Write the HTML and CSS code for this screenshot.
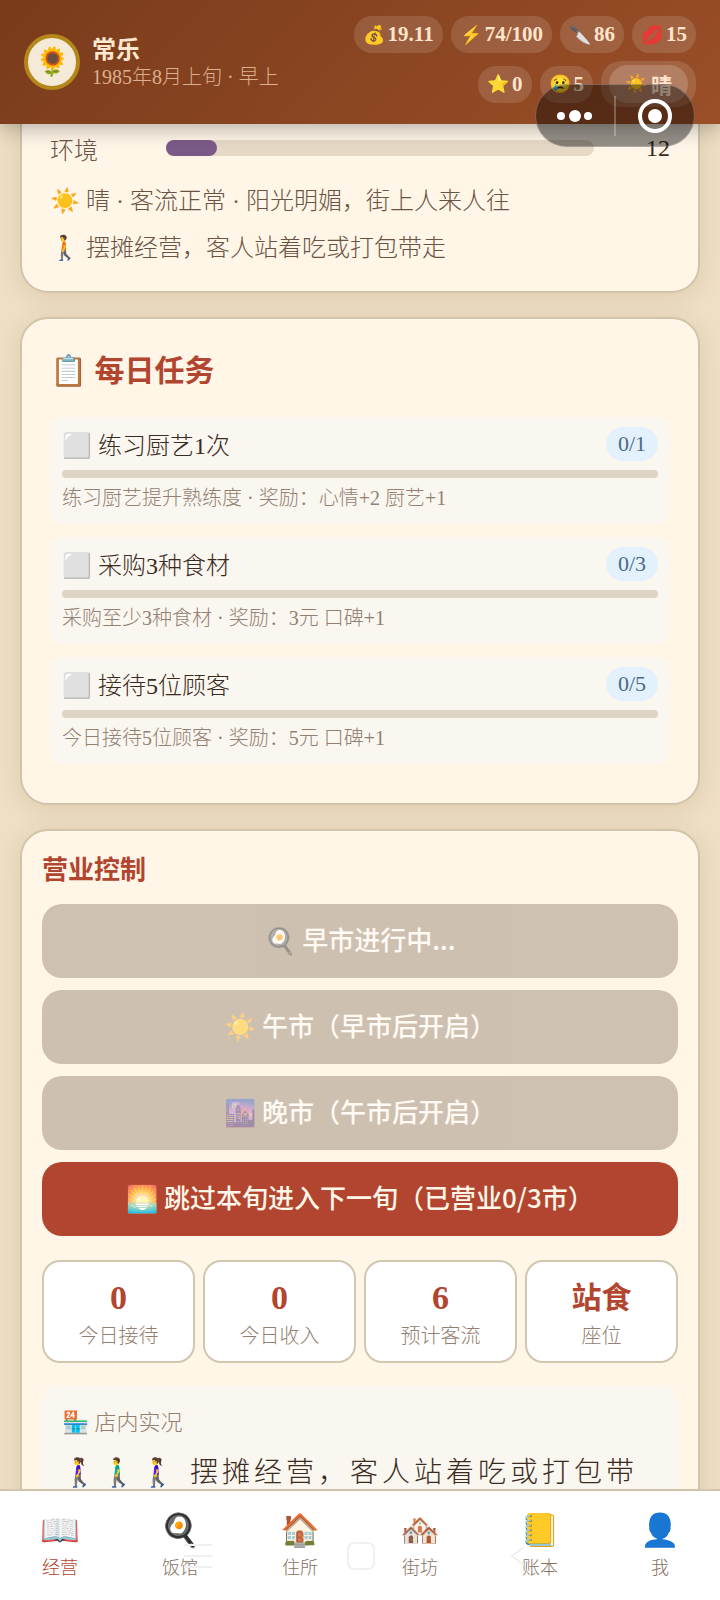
FILE: index.html
```html
<!DOCTYPE html>
<html lang="zh-CN">
<head>
    <meta charset="UTF-8">
    <meta name="viewport" content="width=device-width, initial-scale=1.0">
    <title>常乐 · 经营</title>
    <link rel="stylesheet" href="styles.css">
</head>
<body>

<header class="header">
    <div class="avatar">🌻</div>
    <div class="player">
        <div class="player-name">常乐</div>
        <div class="player-date">1985年8月上旬 · 早上</div>
    </div>
    <div class="stats">
        <span class="chip"><span class="chip-icon">💰</span>19.11</span>
        <span class="chip"><span class="chip-icon">⚡</span>74/100</span>
        <span class="chip"><span class="chip-icon">🔪</span>86</span>
        <span class="chip"><span class="chip-icon">💋</span>15</span>
        <span class="chip"><span class="chip-icon">⭐</span>0</span>
        <span class="chip"><span class="chip-icon">😢</span>5</span>
        <span class="chip chip-weather"><span class="weather"><span class="chip-icon">☀️</span>晴</span></span>
    </div>

    <!-- mini program capsule -->
    <div class="capsule">
        <button class="capsule-btn" aria-label="更多">
            <svg width="36" height="14" viewBox="0 0 36 14" fill="#fff">
                <circle cx="4" cy="7" r="4"/>
                <circle cx="18" cy="7" r="6"/>
                <circle cx="31" cy="7" r="4"/>
            </svg>
        </button>
        <button class="capsule-btn" aria-label="关闭">
            <svg width="34" height="34" viewBox="0 0 34 34">
                <circle cx="17" cy="17" r="15" fill="none" stroke="#fff" stroke-width="4"/>
                <circle cx="17" cy="17" r="7" fill="#fff"/>
            </svg>
        </button>
    </div>
</header>

<main class="content">
    <section class="card card-top">
        <div class="attr">
            <span class="attr-name">环境</span>
            <div class="attr-bar"><div class="attr-fill" style="width: 12%"></div></div>
            <span class="attr-value">12</span>
        </div>
        <p class="note">☀️ 晴 · 客流正常 · 阳光明媚，街上人来人往</p>
        <p class="note">🚶 摆摊经营，客人站着吃或打包带走</p>
    </section>

    <section class="card">
        <h2 class="card-title">📋 每日任务</h2>
        <div class="task">
            <div class="task-head"><span>⬜ 练习厨艺1次</span><span class="badge">0/1</span></div>
            <div class="task-bar"></div>
            <div class="task-desc">练习厨艺提升熟练度 · 奖励：心情+2 厨艺+1</div>
        </div>
        <div class="task">
            <div class="task-head"><span>⬜ 采购3种食材</span><span class="badge">0/3</span></div>
            <div class="task-bar"></div>
            <div class="task-desc">采购至少3种食材 · 奖励：3元 口碑+1</div>
        </div>
        <div class="task">
            <div class="task-head"><span>⬜ 接待5位顾客</span><span class="badge">0/5</span></div>
            <div class="task-bar"></div>
            <div class="task-desc">今日接待5位顾客 · 奖励：5元 口碑+1</div>
        </div>
    </section>

    <section class="card card-control">
        <h3 class="section-title">营业控制</h3>
        <div class="actions">
            <button class="btn" disabled>🍳 早市进行中...</button>
            <button class="btn" disabled>☀️ 午市（早市后开启）</button>
            <button class="btn" disabled>🌆 晚市（午市后开启）</button>
            <button class="btn">🌅 跳过本旬进入下一旬（已营业0/3市）</button>
        </div>
        <div class="summary">
            <div class="summary-item"><div class="summary-num">0</div><div class="summary-label">今日接待</div></div>
            <div class="summary-item"><div class="summary-num">0</div><div class="summary-label">今日收入</div></div>
            <div class="summary-item"><div class="summary-num">6</div><div class="summary-label">预计客流</div></div>
            <div class="summary-item"><div class="summary-num summary-word">站食</div><div class="summary-label">座位</div></div>
        </div>
        <div class="live">
            <div class="live-title">🏪 店内实况</div>
            <div class="live-text">🚶‍♀️🚶‍♂️🚶‍♀️ 摆摊经营，客人站着吃或打包带走</div>
        </div>
    </section>
</main>

<nav class="tabbar">
    <a class="tab active" href="#"><span class="tab-icon">📖</span>经营</a>
    <a class="tab" href="#"><span class="tab-icon">🍳</span>饭馆</a>
    <a class="tab" href="#"><span class="tab-icon">🏠</span>住所</a>
    <a class="tab" href="#"><span class="tab-icon">🏘️</span>街坊</a>
    <a class="tab" href="#"><span class="tab-icon">📒</span>账本</a>
    <a class="tab" href="#"><span class="tab-icon">👤</span>我</a>

    <!-- system navigation keys -->
    <div class="syskeys">
        <svg width="28" height="28" viewBox="0 0 28 28"><path d="M0 3h28M0 14h28M0 25h28"/></svg>
        <svg width="28" height="28" viewBox="0 0 28 28"><rect x="1" y="1" width="26" height="26" rx="6"/></svg>
        <svg width="24" height="28" viewBox="0 0 24 28"><path d="M14 5L2 14l12 9"/></svg>
    </div>
</nav>

</body>
</html>
```

FILE: styles.css
```css
* {
    box-sizing: border-box;
}
body {
    font-family: 'Liberation Serif', 'Noto Sans CJK SC', serif;
    font-weight: 300;
    color: #3a2a20;
    background-color: #eee0c5;
    margin: 0;
    height: 100vh;
    display: flex;
    flex-direction: column;
}
h2, h3, p {
    margin: 0;
}
button {
    font-family: inherit;
    border: none;
    padding: 0;
    cursor: pointer;
}

/* header */
.header {
    position: relative;
    z-index: 2;
    display: flex;
    align-items: center;
    gap: 12px;
    padding: 16px 24px 17px;
    background: linear-gradient(135deg, #7a3b1b, #9a4f28);
    box-shadow: 0 4px 20px rgba(0, 0, 0, 0.3);
}
.avatar {
    flex: none;
    display: flex;
    justify-content: center;
    align-items: center;
    width: 56px;
    height: 56px;
    font-size: 28px;
    background-color: #f5e9d7;
    border: 4px solid #b38719;
    border-radius: 50%;
}
.player {
    flex: none;
}
.player-name {
    padding-top: 2px;
    font-size: 24px;
    line-height: 28px;
    font-weight: bold;
    color: #ffe8d0;
}
.player-date {
    font-size: 20px;
    line-height: 26px;
    color: #dcaf8e;
}
.stats {
    flex: 1;
    max-width: 380px;
    margin-left: auto;
    display: flex;
    flex-wrap: wrap;
    justify-content: flex-end;
    align-items: center;
    gap: 8px;
}
.chip {
    display: flex;
    align-items: center;
    gap: 3px;
    height: 37px;
    padding: 0 9px;
    font-size: 21px;
    font-weight: bold;
    color: #ffe4cc;
    background-color: rgba(255, 255, 255, 0.13);
    border-radius: 18px;
}
.chip-icon {
    font-size: 18px;
}
.chip-weather {
    height: 46px;
    padding: 0 8px;
    border-radius: 20px;
}
.weather {
    display: flex;
    align-items: center;
    gap: 4px;
    height: 38px;
    padding: 0 16px;
    background-color: rgba(255, 255, 255, 0.18);
    border-radius: 20px;
}
.capsule {
    position: absolute;
    top: 84px;
    right: 25px;
    display: flex;
    align-items: center;
    width: 160px;
    height: 63px;
    background-color: rgba(0, 0, 0, 0.42);
    border: 1px solid rgba(255, 255, 255, 0.25);
    border-radius: 32px;
}
.capsule-btn {
    flex: 1;
    display: flex;
    justify-content: center;
    align-items: center;
    height: 40px;
    background: none;
}
.capsule-btn + .capsule-btn {
    border-left: 2px solid rgba(255, 255, 255, 0.25);
}

/* scrolling area */
.content {
    flex: 1;
    min-height: 0;
    overflow: hidden;
    padding: 0 20px;
}
.card {
    margin-bottom: 24px;
    padding: 28px 28px 26px;
    background-color: #fff6e8;
    border: 2px solid #d1c4aa;
    border-radius: 28px;
    box-shadow: 0 4px 24px rgba(139, 90, 43, 0.16);
}
.card-top {
    padding: 4px 28px 23px;
    border-top: none;
    border-radius: 0 0 28px 28px;
}
.attr {
    display: flex;
    align-items: center;
    height: 40px;
    margin-bottom: 13px;
    font-size: 24px;
}
.attr-name {
    width: 116px;
    color: #6b5344;
}
.attr-bar {
    flex: 1;
    height: 16px;
    background-color: #e6dac6;
    border-radius: 8px;
}
.attr-fill {
    height: 16px;
    background-color: #7b5a88;
    border-radius: 8px;
}
.attr-value {
    width: 76px;
    text-align: right;
}
.note {
    font-size: 24px;
    line-height: 40px;
    color: #6b5344;
}
.note + .note {
    margin-top: 7px;
}

/* daily tasks */
.card-title {
    margin-bottom: 22px;
    font-size: 30px;
    line-height: 48px;
    color: #b2452f;
}
.task {
    margin-bottom: 14px;
    padding: 10px 12px 11px;
    background-color: #faf7f0;
    border-radius: 12px;
}
.task-head {
    display: flex;
    justify-content: space-between;
    align-items: flex-start;
    height: 34px;
    font-size: 24px;
    line-height: 38px;
}
.badge {
    padding: 0 12px;
    font-size: 22px;
    line-height: 34px;
    color: #4c6a86;
    background-color: #e3f1fd;
    border-radius: 17px;
}
.task-bar {
    height: 8px;
    margin: 9px 0 6px;
    background-color: #ded4c4;
    border-radius: 4px;
}
.task-desc {
    font-size: 20px;
    line-height: 28px;
    color: #948070;
}

/* business control */
.card-control {
    padding: 20px;
}
.section-title {
    margin-bottom: 13px;
    font-size: 26px;
    line-height: 40px;
    color: #b2452f;
}
.actions {
    display: flex;
    flex-direction: column;
    gap: 12px;
    margin-bottom: 24px;
}
.btn {
    height: 74px;
    padding-bottom: 6px;
    font-family: 'Noto Sans CJK SC', sans-serif;
    font-size: 26px;
    font-weight: 500;
    color: #fff6e8;
    background-color: #b2452f;
    border-radius: 20px;
}
.btn:disabled {
    background-color: #9f8c7b;
    opacity: 0.5;
    color: #fff;
    cursor: default;
}
.summary {
    display: grid;
    grid-template-columns: repeat(4, 1fr);
    gap: 8px;
    margin-bottom: 23px;
}
.summary-item {
    padding: 14px 0 11px;
    text-align: center;
    background-color: #fff;
    border: 2px solid #d1c7b0;
    border-radius: 18px;
}
.summary-num {
    margin-bottom: 2px;
    font-size: 34px;
    line-height: 44px;
    font-weight: bold;
    color: #b2452f;
}
.summary-word {
    font-size: 30px;
}
.summary-label {
    font-size: 20px;
    line-height: 28px;
    color: #948070;
}
.live {
    padding: 20px;
    background-color: #faf7f0;
    border-radius: 16px;
}
.live-title {
    font-size: 22px;
    line-height: 34px;
    color: #948070;
}
.live-text {
    margin-top: 9px;
    font-size: 28px;
    line-height: 48px;
    letter-spacing: 4px;
}

/* bottom tabs */
.tabbar {
    position: relative;
    z-index: 2;
    display: flex;
    height: 111px;
    background-color: #fff;
    border-top: 2px solid #d1c4aa;
}
.tab {
    flex: 1;
    display: flex;
    flex-direction: column;
    align-items: center;
    padding-top: 17px;
    font-size: 18px;
    line-height: 26px;
    color: #85715f;
    text-decoration: none;
}
.tab.active {
    color: #b2452f;
}
.tab-icon {
    margin-bottom: 3px;
    font-size: 32px;
    line-height: 44px;
}
.syskeys {
    position: absolute;
    top: 51px;
    left: 184px;
    right: 186px;
    display: flex;
    justify-content: space-between;
    align-items: center;
    pointer-events: none;
    fill: none;
    stroke: #f0f0f0;
    stroke-width: 2;
}
```
